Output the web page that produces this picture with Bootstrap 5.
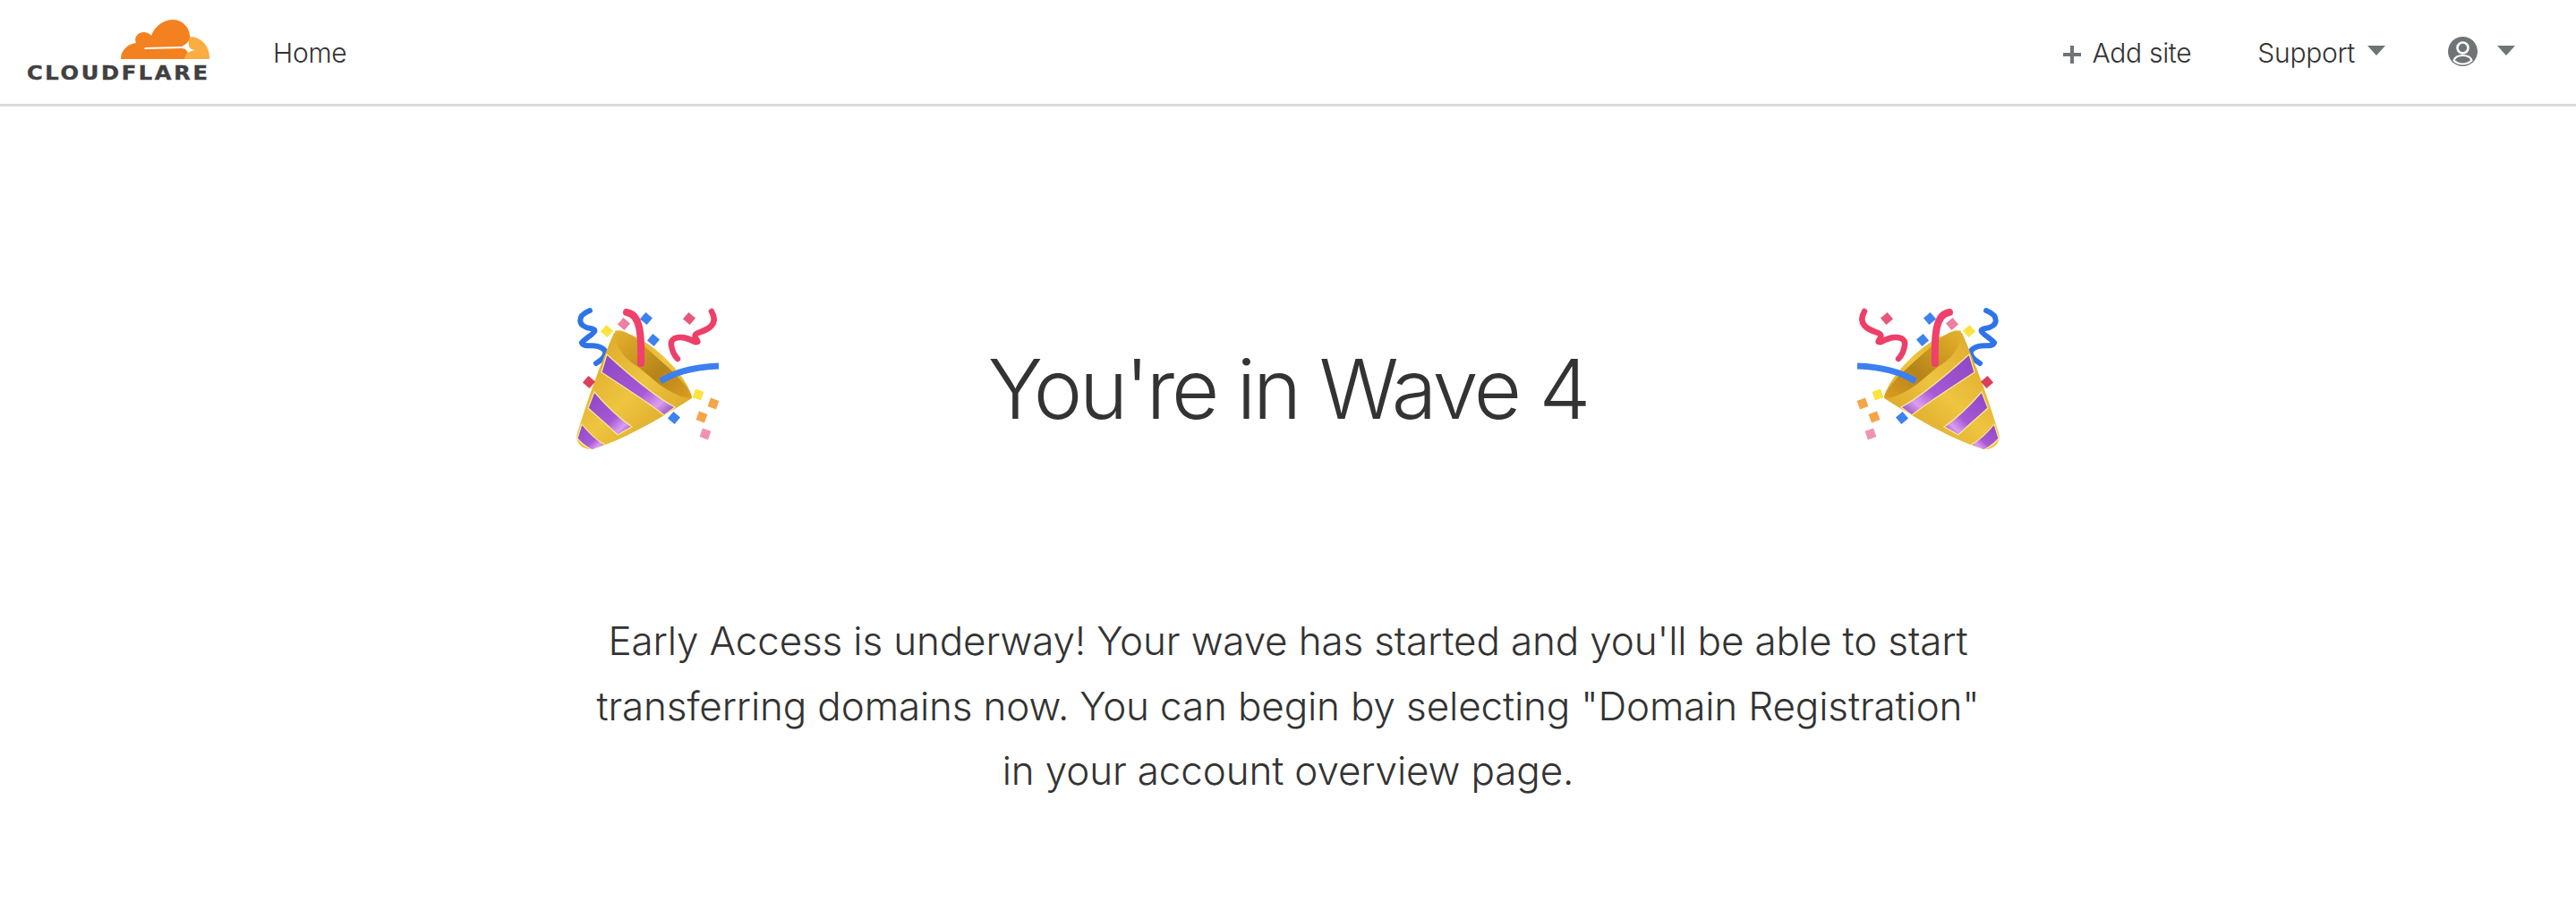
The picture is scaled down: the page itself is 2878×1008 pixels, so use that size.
<!doctype html>
<html lang="en">
  <head>
    <title>You're in Wave 4</title>
    <meta charset="utf-8" />
    <meta name="viewport" content="width=device-width, initial-scale=1" />
    <link href="https://cdn.jsdelivr.net/npm/bootstrap@5.3.3/dist/css/bootstrap.min.css" rel="stylesheet" />
    <script src="https://cdn.jsdelivr.net/npm/bootstrap@5.3.3/dist/js/bootstrap.bundle.min.js"></script>
    <style>
      body {
        font-family: Inter, "Liberation Sans", sans-serif;
        color: #333;
        background: #fff;
        overflow: hidden;
      }
      .cf-nav {
        height: 119px;
        padding: 0 68px 0 30px;
        border-bottom: 3px solid #dcdcdc;
        background: #fff;
      }
      .cf-brand {
        width: 204px;
        margin-right: 71px;
        margin-top: -3px;
        line-height: 1;
      }
      .cf-cloud { display: block; margin-left: 105px; }
      .cf-word {
        display: block;
        margin-top: 6px;
        font-family: "DejaVu Sans", sans-serif;
        font-weight: 700;
        font-size: 21px;
        line-height: 19px;
        letter-spacing: 2.3px;
        color: #404041;
        white-space: nowrap;
        transform: scaleX(1.15);
        transform-origin: left center;
        -webkit-text-stroke: .4px #404041;
      }
      .cf-link {
        font-size: 30px;
        font-weight: 300;
        letter-spacing: -.3px;
        color: #333;
        text-decoration: none;
        padding: 0;
        line-height: 40px;
        margin-top: 2px;
      }
      .cf-link:hover { color: #333; }
      .cf-caret::after {
        margin-left: 14px;
        vertical-align: 8px;
        border-top: 11px solid #6f7477;
        border-left: 10.5px solid transparent;
        border-right: 10.5px solid transparent;
        border-bottom: 0;
      }
      .cf-plus { margin-right: 13px; vertical-align: -1px; }
      .cf-add { margin-right: 74px; }
      .cf-support { margin-right: 70px; }
      .cf-avatar { vertical-align: -4px; }
      .cf-user::after { margin-left: 22px; }
      .cf-main { padding-top: 201px; }
      .cf-popper { width: 200px; height: 190px; flex: none; }
      .cf-flip { transform: scaleX(-1); }
      .cf-title {
        width: 1238px;
        font-size: 92px;
        font-weight: 300;
        letter-spacing: -3.2px;
        line-height: 110px;
        margin: 60px 0 0;
        color: #333;
      }
      .cf-text {
        width: 1572px;
        margin: 170px auto 0;
        font-size: 44px;
        font-weight: 300;
        letter-spacing: -.15px;
        line-height: 72.5px;
      }
    </style>
  </head>
  <body>
    <svg width="0" height="0" class="position-absolute">
      <defs>
        <linearGradient id="gold" x1="0" y1="0" x2="1" y2="1">
          <stop offset="0" stop-color="#d8a322" />
          <stop offset=".5" stop-color="#eec440" />
          <stop offset="1" stop-color="#d39a1e" />
        </linearGradient>
        <linearGradient id="mouth" x1="0" y1="0" x2="1" y2="1">
          <stop offset="0" stop-color="#e6b22b" />
          <stop offset=".6" stop-color="#b5841a" />
          <stop offset="1" stop-color="#dd9c20" />
        </linearGradient>
        <linearGradient id="band" x1="0" y1="0" x2="1" y2="1">
          <stop offset="0" stop-color="#8d46c4" />
          <stop offset=".6" stop-color="#a758d6" />
          <stop offset=".8" stop-color="#dc9df0" />
          <stop offset="1" stop-color="#7c3bb5" />
        </linearGradient>
        <clipPath id="coneClip">
          <path d="M66 52C50 88 36 128 25 164C22 174 30 183 42 182C80 170 120 146 153 125L120 70Z" />
        </clipPath>
        <symbol id="popper" viewBox="0 0 200 190">
          <path d="M39 27C24 33 25 45 40 47C52 49 36 56 30 63C32 70 48 62 56 72C58 78 52 82 46 86" fill="none" stroke="#2f73ea" stroke-width="6" stroke-linecap="round" />
          <path d="M66 52C50 88 36 128 25 164C22 174 30 183 42 182C80 170 120 146 153 125C150 100 95 45 66 52Z" fill="url(#gold)" />
          <g clip-path="url(#coneClip)" fill="url(#band)" stroke="#f8ec9a" stroke-width="1.2">
            <path d="M58 76L52 96C76 112 102 128 122 144L134 135C110 122 82 98 58 76Z" />
            <path d="M44 118L37 136C48 146 60 156 70 166L86 157C70 146 56 132 44 118Z" />
            <path d="M30 154L25 170C30 176 36 180 42 183L56 177C46 172 38 164 30 154Z" />
          </g>
          <path d="M67 50C75 47 87 55 100 67C120 85 145 105 153 123C150 128 135 122 117 110L93 90C80 82 68 72 67 50Z" fill="url(#mouth)" />
          <path d="M80 29C95 31 97 52 96 86" fill="none" stroke="#f0406c" stroke-width="8" stroke-linecap="round" />
          <path d="M118 106C135 95 155 90 183 89" fill="none" stroke="#3c7ff0" stroke-width="7" stroke-linecap="butt" />
          <path d="M175 28C183 42 172 48 160 52C150 56 166 64 156 62C142 54 128 56 130 66C131 72 134 78 137 81" fill="none" stroke="#ee3f68" stroke-width="6.5" stroke-linecap="round" />
          <rect x="53" y="45" width="10" height="10" transform="rotate(40 58 50)" fill="#fbe33f" />
          <rect x="72" y="37" width="10" height="10" transform="rotate(40 77 42)" fill="#ee7fa0" />
          <rect x="97" y="31" width="10" height="10" transform="rotate(40 102 36)" fill="#3d82ef" />
          <rect x="105" y="55" width="10" height="10" transform="rotate(40 110 60)" fill="#3d82ef" />
          <rect x="145" y="31" width="10" height="10" transform="rotate(40 150 36)" fill="#e8577a" />
          <rect x="33" y="102" width="10" height="10" transform="rotate(40 38 107)" fill="#dd3f58" />
          <rect x="155" y="116" width="10" height="10" transform="rotate(20 160 121)" fill="#fbe33f" />
          <rect x="172" y="126" width="10" height="10" transform="rotate(20 177 131)" fill="#f4a548" />
          <rect x="159" y="141" width="10" height="10" transform="rotate(20 164 146)" fill="#f4a548" />
          <rect x="128" y="142" width="10" height="10" transform="rotate(40 133 147)" fill="#3d82ef" />
          <rect x="163" y="160" width="10" height="10" transform="rotate(20 168 165)" fill="#f391b5" />
        </symbol>
      </defs>
    </svg>

    <nav class="navbar cf-nav d-flex flex-nowrap align-items-center">
      <a class="cf-brand text-decoration-none" href="#">
        <svg class="cf-cloud" width="100" height="46" viewBox="0 0 100 46">
          <path d="M0 45C0 35 8 28 17 27C14 20 20 14 27 15C31 16 33 17 34 19C38 7 50 0 60 1C70 2 76 10 77 18C78 24 74 28 68 31L27 32L26 34L68 33C73 33 76 37 76 45Z" fill="#f48120" />
          <path d="M77 20C90 20 100 31 99 45L71 45C72 39 75 37 83 35C76 34 74 30 77 20Z" fill="#fbad41" />
        </svg>
        <span class="cf-word">CLOUDFLARE</span>
      </a>
      <a class="cf-link" href="#">Home</a>
      <div class="ms-auto d-flex align-items-center">
        <a class="cf-link cf-add" href="#"><svg class="cf-plus" width="20" height="20" viewBox="0 0 20 20"><path d="M10 0v20M0 10h20" stroke="#6f7477" stroke-width="4" /></svg>Add site</a>
        <a class="cf-link cf-caret cf-support dropdown-toggle" href="#">Support</a>
        <a class="cf-link cf-caret cf-user dropdown-toggle" href="#"><svg class="cf-avatar" width="33" height="33" viewBox="0 0 33 33"><circle cx="16.5" cy="16.5" r="16.5" fill="#6f7477" /><circle cx="16.5" cy="12.5" r="6" fill="none" stroke="#fff" stroke-width="2.6" /><path d="M6.5 26.5c1.5-4.500 5.500-5.500 10-5.500s8.500 1 10 5.500c-2.500 2.500-6 4-10 4s-7.500-1.500-10-4z" fill="none" stroke="#fff" stroke-width="2.2" /></svg></a>
      </div>
    </nav>

    <main class="cf-main text-center">
      <div class="d-flex justify-content-center align-items-start">
        <svg class="cf-popper"><use href="#popper" /></svg>
        <h1 class="cf-title">You're in Wave 4</h1>
        <svg class="cf-popper cf-flip"><use href="#popper" /></svg>
      </div>
      <p class="cf-text">Early Access is underway! Your wave has started and you'll be able to start transferring domains now. You can begin by selecting "Domain Registration" in your account overview page.</p>
    </main>
  </body>
</html>
